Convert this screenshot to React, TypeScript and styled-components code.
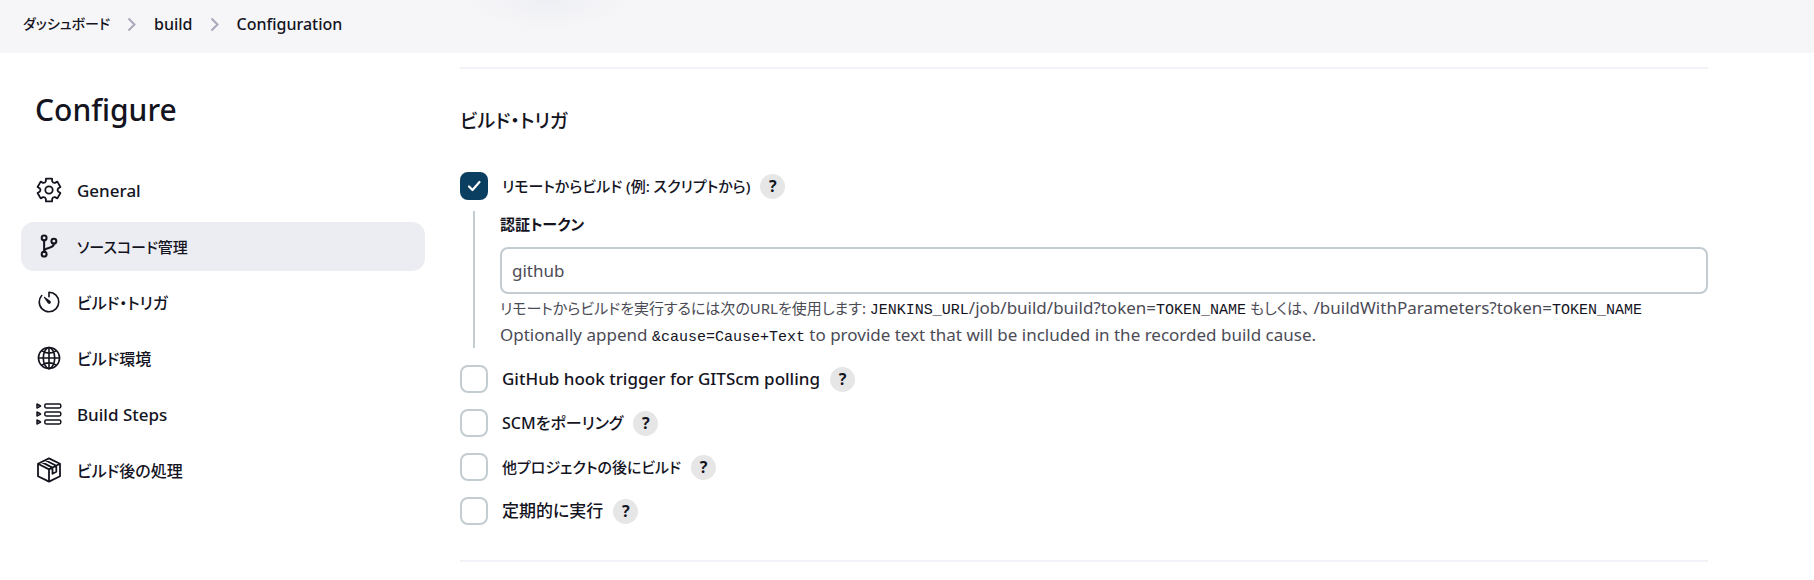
import React from 'react';
import styled, { createGlobalStyle } from 'styled-components';
import { IoGitBranchOutline, IoTimerOutline, IoGlobeOutline } from 'react-icons/io5';

const ink = '#14141f';
const line = '#c3ccd1';
const sans = '"Noto Sans", "Noto Sans CJK JP", sans-serif';

type Script = 'latin' | 'mixed' | 'kana';
const sizes: Record<Script, string> = { latin: '17px', mixed: '16px', kana: '15px' };

const GlobalStyle = createGlobalStyle`
  *, *::before, *::after { box-sizing: border-box; }
  body {
    margin: 0;
    background: #fff;
    color: ${ink};
    font-family: ${sans};
    font-size: 17px;
    font-feature-settings: "palt";
  }
`;

const Breadcrumbs = styled.nav`
  height: 53px;
  padding: 0 23px;
  display: flex;
  align-items: center;
  background: radial-gradient(ellipse 80px 30px at 548px 0, #eeeff4, #f6f6f8) #f6f6f8;
`;
const CrumbList = styled.ol`
  display: flex;
  align-items: center;
  gap: 17px;
  margin: 0;
  padding: 0 0 5px;
  list-style: none;
`;
const Crumb = styled.li`
  display: flex;
  align-items: center;
  gap: 17px;
  font-size: 16px;
  font-weight: 500;
  line-height: 24px;
  svg { display: block; }
`;
const CrumbLink = styled.a<{ $kana?: boolean }>`
  color: inherit;
  font-size: ${p => (p.$kana ? '14px' : '16px')};
  text-decoration: none;
`;

const Page = styled.div`
  display: flex;
  align-items: flex-start;
  gap: 35px;
  padding: 14px 106px 0 21px;
`;
const Side = styled.aside`
  flex: 0 0 404px;
  padding-top: 21px;
`;
const Title = styled.h1`
  margin: 0 0 34px;
  padding-left: 14px;
  font-size: 30px;
  line-height: 44px;
  font-weight: 500;
`;
const Tasks = styled.nav`
  display: flex;
  flex-direction: column;
  gap: 7px;
`;
const Task = styled.a<{ $active?: boolean; $script: Script }>`
  display: flex;
  align-items: center;
  gap: 15px;
  height: 49px;
  padding: 0 15px 1px;
  border-radius: 13px;
  background: ${p => (p.$active ? '#ecedf3' : 'transparent')};
  color: inherit;
  font-size: ${p => sizes[p.$script]};
  font-weight: 500;
  text-decoration: none;
  svg { flex: none; width: 26px; height: 26px; }
`;
const BranchIcon = styled(IoGitBranchOutline)`
  path, circle { stroke-width: 40px; }
`;

const Main = styled.main`
  flex: 1;
  min-width: 0;
`;
const Section = styled.section`
  padding: 33px 0 35px;
  border: solid #f2f2f9;
  border-width: 2px 0;
`;
const SectionTitle = styled.h2`
  margin: 0 0 32px;
  font-size: 19px;
  line-height: 38px;
  font-weight: 500;
`;
const Options = styled.div`
  display: flex;
  flex-direction: column;
  gap: 16px;
`;
const OptionRow = styled.div`
  display: flex;
  align-items: center;
  gap: 10px;
  height: 28px;
`;
const OptionLabel = styled.label<{ $script: Script }>`
  display: flex;
  align-items: center;
  gap: 14px;
  font-size: ${p => sizes[p.$script]};
  font-weight: 500;
  line-height: 28px;
`;
const Tick = styled.span`
  display: grid;
  width: 28px;
  height: 28px;
  > * { grid-area: 1 / 1; }
  svg { z-index: 1; pointer-events: none; }
`;
const TickInput = styled.input`
  appearance: none;
  width: 28px;
  height: 28px;
  margin: 0;
  border: 2px solid ${line};
  border-radius: 8px;
  background: #fff;
  &:checked { border-color: #0b3f61; background: #0b3f61; }
`;
const Help = styled.button`
  width: 25px;
  height: 25px;
  padding: 0;
  border: 0;
  border-radius: 50%;
  background: #e6e6e6;
  color: ${ink};
  font: 700 16px/25px ${sans};
`;
const Nested = styled.div`
  margin: -5px 0 1px 13px;
  padding-left: 25px;
  border-left: 2px solid ${line};
`;
const FieldLabel = styled.label`
  display: block;
  margin-bottom: 9px;
  font-size: ${sizes.kana};
  font-weight: 600;
  line-height: 27px;
`;
const TextInput = styled.input`
  display: block;
  width: 100%;
  height: 47px;
  padding: 0 10px;
  border: 2px solid ${line};
  border-radius: 8px;
  background: #fff;
  color: #4b4b55;
  font: 400 17px ${sans};
`;
const Description = styled.p`
  margin: 0;
  color: #4b4b55;
  line-height: 27px;
`;
const Kana = styled.span`
  font-size: ${sizes.kana};
  line-height: 1;
`;
const Code = styled.code`
  color: ${ink};
  font: 400 15px/1 "Liberation Mono", monospace;
`;

const Chevron = () => (
  <svg width="10" height="16" viewBox="0 0 10 16" fill="none" stroke="#a9a9bb" strokeWidth="2" aria-hidden="true">
    <path d="M1.5 2.5 7.5 8.5l-6 6" />
  </svg>
);

/* Point on the gear: degrees clockwise from the top, distance from the centre. */
const polar = (deg: number, r: number) => {
  const a = (deg * Math.PI) / 180;
  return `${(13 + r * Math.sin(a)).toFixed(2)} ${(13 - r * Math.cos(a)).toFixed(2)}`;
};
const gearPath = `M${polar(-15, 11.8)}${[0, 60, 120, 180, 240, 300]
  .map(t => `L${polar(t + 15, 11.8)}L${polar(t + 20, 9.3)}Q${polar(t + 30, 7.9)} ${polar(t + 40, 9.3)}L${polar(t + 45, 11.8)}`)
  .join('')}Z`;

const Gear = () => (
  <svg viewBox="0 0 26 26" fill="none" stroke="currentColor" strokeWidth="1.8" strokeLinejoin="round" aria-hidden="true">
    <circle cx="13" cy="13" r="3.7" />
    <path d={gearPath} />
  </svg>
);

const Steps = () => (
  <svg viewBox="0 0 26 26" fill="none" stroke="currentColor" strokeWidth="1.5" strokeLinejoin="round" aria-hidden="true">
    {[5, 13, 21].map(y => (
      <g key={y}>
        <path d={`M1 ${y - 2}v4l3.6-2z`} />
        <rect x="8.8" y={y - 1.9} width="16" height="3.8" rx="1.4" />
      </g>
    ))}
  </svg>
);

const Package = () => (
  <svg viewBox="0 0 26 26" fill="none" stroke="currentColor" strokeWidth="1.8" strokeLinejoin="round" aria-hidden="true">
    <path d="M13 1.4 24 6.800v12.400l-11 5.400L2 19.200V6.800zM2 6.800l11 5.600 11-5.600M13 12.400v12.200M5.700 5.100l10.800 5.500v6.200l3.800-2V8.700L9.400 3.300" />
  </svg>
);

const tasks: { name: string; icon: React.ReactNode; script: Script; active?: boolean }[] = [
  { name: 'General', icon: <Gear />, script: 'latin' },
  { name: 'ソースコード管理', icon: <BranchIcon />, script: 'kana', active: true },
  { name: 'ビルド・トリガ', icon: <IoTimerOutline />, script: 'mixed' },
  { name: 'ビルド環境', icon: <IoGlobeOutline />, script: 'mixed' },
  { name: 'Build Steps', icon: <Steps />, script: 'latin' },
  { name: 'ビルド後の処理', icon: <Package />, script: 'mixed' },
];

const Option = ({ label, script, checked }: { label: string; script: Script; checked?: boolean }) => (
  <OptionRow>
    <OptionLabel $script={script}>
      <Tick>
        <TickInput type="checkbox" defaultChecked={checked} />
        {checked && (
          <svg viewBox="0 0 28 28" fill="none" stroke="#fff" strokeWidth="2.2" strokeLinecap="round" strokeLinejoin="round" aria-hidden="true">
            <path d="m9 14.500 3.500 3.500 7-8" />
          </svg>
        )}
      </Tick>
      {label}
    </OptionLabel>
    <Help type="button">?</Help>
  </OptionRow>
);

export default function App() {
  return (
    <>
      <GlobalStyle />
      <Breadcrumbs>
        <CrumbList>
          <Crumb><CrumbLink href="#dashboard" $kana>ダッシュボード</CrumbLink><Chevron /></Crumb>
          <Crumb><CrumbLink href="#build">build</CrumbLink><Chevron /></Crumb>
          <Crumb>Configuration</Crumb>
        </CrumbList>
      </Breadcrumbs>
      <Page>
        <Side>
          <Title>Configure</Title>
          <Tasks>
            {tasks.map(t => (
              <Task key={t.name} href="#section" $active={t.active} $script={t.script}>{t.icon}{t.name}</Task>
            ))}
          </Tasks>
        </Side>
        <Main>
          <Section>
            <SectionTitle>ビルド・トリガ</SectionTitle>
            <Options>
              <Option label="リモートからビルド (例: スクリプトから)" script="kana" checked />
              <Nested>
                <FieldLabel htmlFor="token">認証トークン</FieldLabel>
                <TextInput id="token" type="text" defaultValue="github" />
                <Description>
                  <Kana>リモートからビルドを実行するには次のURLを使用します: </Kana>
                  <Code>JENKINS_URL</Code>/job/build/build?token=<Code>TOKEN_NAME</Code>
                  <Kana> もしくは、 </Kana>
                  /buildWithParameters?token=<Code>TOKEN_NAME</Code>
                </Description>
                <Description>
                  Optionally append <Code>&amp;cause=Cause+Text</Code> to provide text that will be included in the recorded build cause.
                </Description>
              </Nested>
              <Option label="GitHub hook trigger for GITScm polling" script="latin" />
              <Option label="SCMをポーリング" script="mixed" />
              <Option label="他プロジェクトの後にビルド" script="kana" />
              <Option label="定期的に実行" script="latin" />
            </Options>
          </Section>
        </Main>
      </Page>
    </>
  );
}
